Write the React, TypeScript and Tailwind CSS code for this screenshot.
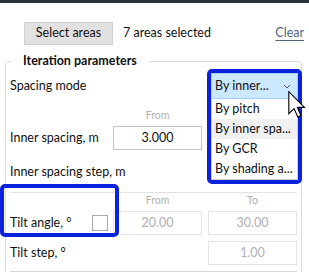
import React from "react";

const font = { fontFamily: 'Lato, "Open Sans", sans-serif' };

function Cursor() {
  return (
    <svg width="18" height="27" viewBox="0 0 12.5 19" className="absolute left-[288px] top-[91px]">
      <path d="M0.5 0.5 L0.5 16 L4.2 12.4 L6.8 18.3 L9 17.3 L6.5 11.5 L11.5 11.5 Z" fill="#fff" stroke="#000" strokeWidth="0.8" strokeLinejoin="miter" />
    </svg>
  );
}

export default function App() {
  return (
    <div className="relative w-[309px] h-[272px] overflow-hidden bg-white text-[12.5px] text-[#111111]" style={font}>
      <div className="h-[3px] bg-[#2c333d]" />
      <div className="flex items-center mt-[19px] pl-[24px] pr-[5px]">
        <div className="w-[89px] h-[23px] flex items-center justify-center bg-[#e1e1e1] border border-[#cfcfcf]">
          Select areas
        </div>
        <div className="ml-[10px]">7 areas selected</div>
        <div className="ml-auto underline underline-offset-[3px] decoration-[#52657c] text-[#52657c]">Clear</div>
      </div>
      <fieldset className="mt-[8px] ml-[5px] w-[296px] h-[230px] border border-[#dddddd] rounded-[3px] pl-[4px] pr-[4px]">
        <legend className="px-[13px] font-bold leading-[16px]">Iteration parameters</legend>
        <div className="h-[26px] mt-[4px] flex items-center">Spacing mode</div>
        <div className="grid grid-cols-[97px_89px_89px] gap-x-[6px] mt-[10px]">
          <div />
          <div className="h-[14px] flex items-center justify-center text-[10.5px] text-[#b0b0b0]">From</div>
          <div />
        </div>
        <div className="grid grid-cols-[97px_89px_89px] gap-x-[6px] mt-[3px] items-center">
          <div>Inner spacing, m</div>
          <div className="h-[24px] border border-[#c4c4c4] flex items-center justify-center">3.000</div>
          <div />
        </div>
        <div className="h-[24px] mt-[10px] flex items-center">Inner spacing step, m</div>
        <div className="mt-[8px] border-t border-[#e2e2e2] w-[287px]" />
        <div className="grid grid-cols-[97px_89px_89px] gap-x-[6px] mt-[1px]">
          <div />
          <div className="h-[14px] flex items-center justify-center text-[10.5px] text-[#b0b0b0]">From</div>
          <div className="h-[14px] flex items-center justify-center text-[10.5px] text-[#b0b0b0]">To</div>
        </div>
        <div className="grid grid-cols-[97px_89px_89px] gap-x-[6px] mt-[3px] items-center">
          <div className="flex items-center">
            <span>Tilt angle, °</span>
            <span className="ml-auto mr-[-1px] w-[16px] h-[16px] border border-[#a9a9a9] bg-white" />
          </div>
          <div className="h-[24px] border border-[#e4e4e4] flex items-center justify-center text-[#b0b0b0]">20.00</div>
          <div className="h-[24px] border border-[#e4e4e4] flex items-center justify-center text-[#b0b0b0]">30.00</div>
        </div>
        <div className="grid grid-cols-[97px_89px_89px] gap-x-[6px] mt-[6px] items-center">
          <div>Tilt step, °</div>
          <div />
          <div className="h-[24px] border border-[#e4e4e4] flex items-center justify-center text-[#b0b0b0]">1.00</div>
        </div>
        <div className="mt-[6px] border-t border-[#d4d4d4] w-[287px]" />
      </fieldset>

      {/* Dropdown overlay */}
      <div className="absolute left-[207px] top-[69px] w-[95px] border-[4px] border-[#0b22dc] rounded-[5px] bg-white overflow-hidden">
        <div className="h-[26px] bg-[#cce8ff] border border-[#9fd0f5] flex items-center pl-[3px] pr-[6px]">
          <span>By inner...</span>
          <svg width="8" height="5" viewBox="0 0 8 5" className="ml-auto">
            <path d="M1 1 L4 4 L7 1" fill="none" stroke="#555" strokeWidth="1" />
          </svg>
        </div>
        <div className="border border-t-0 border-[#cfcfcf] flex flex-col">
          <div className="h-[20px] flex items-center pl-[3px] whitespace-nowrap">By pitch</div>
          <div className="h-[20px] flex items-center pl-[3px] bg-[#f0f0f0] whitespace-nowrap">By inner spa...</div>
          <div className="h-[20px] flex items-center pl-[3px] whitespace-nowrap">By GCR</div>
          <div className="h-[20px] flex items-center pl-[3px] whitespace-nowrap">By shading a...</div>
        </div>
      </div>

      {/* Highlight around tilt angle */}
      <div className="absolute left-[0px] top-[184px] w-[119px] h-[53px] border-[4px] border-[#0b22dc] rounded-[5px]" />

      <Cursor />
    </div>
  );
}
